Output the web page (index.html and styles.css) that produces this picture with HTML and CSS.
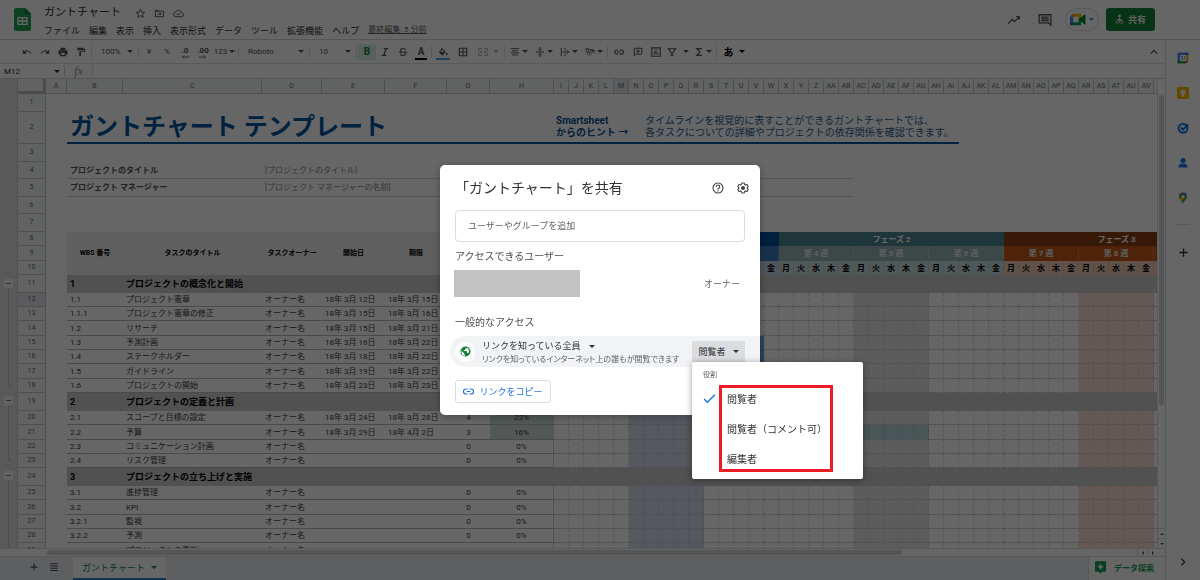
FILE: index.html
```html
<!DOCTYPE html>
<html lang="ja">
<head>
<meta charset="utf-8">
<meta name="viewport" content="width=device-width, initial-scale=1">
<title>ガントチャート</title>
<link rel="stylesheet" href="styles.css">
</head>
<body>
<div class="app">
  <header class="top">
    <svg class="logo" viewBox="0 0 17 23" aria-hidden="true"><path fill="#23a455" d="M2 0h9l6 6v15a2 2 0 0 1-2 2H2a2 2 0 0 1-2-2V2a2 2 0 0 1 2-2z"/><path fill="#117a3b" d="M11 0l6 6h-4.500a1.500 1.500 0 0 1-1.500-1.500z"/><path fill="none" stroke="#fff" stroke-width="1.300" d="M4 9.600h9v6.800H4zM4 13h9M8.500 9.600v6.800"/></svg>
    <div class="doc">
      <div class="doc-line">
        <h1 class="doc-title">ガントチャート</h1>
        <button class="mini" aria-label="スター"><svg viewBox="0 0 24 24"><path fill="none" stroke="currentColor" stroke-width="2" stroke-linejoin="round" d="M12 3l2.700 6 6.500.6-4.900 4.300 1.500 6.400-5.800-3.500-5.800 3.500 1.500-6.400L2.800 9.600 9.300 9z"/></svg></button>
        <button class="mini" aria-label="移動"><svg viewBox="0 0 24 24"><path fill="none" stroke="currentColor" stroke-width="2" d="M3 5h6l2 2h10v12H3zM3 7h8"/><path fill="none" stroke="currentColor" stroke-width="2" d="M8 13h7M12.500 10l3 3-3 3"/></svg></button>
        <button class="mini" aria-label="保存状態"><svg viewBox="0 0 24 24"><path fill="none" stroke="currentColor" stroke-width="2" d="M18.500 19H6a5 5 0 0 1-.6-9.900 7 7 0 0 1 13.200 1.300 4.300 4.300 0 0 1-.1 8.600z"/><path fill="none" stroke="currentColor" stroke-width="2" d="M8.500 13l2.500 2.500 4.500-4.500"/></svg></button>
      </div>
      <nav class="menus">
        <button>ファイル</button><button>編集</button><button>表示</button><button>挿入</button><button>表示形式</button><button>データ</button><button>ツール</button><button>拡張機能</button><button>ヘルプ</button>
        <a class="edited" href="#">最終編集: 5 分前</a>
      </nav>
    </div>
    <div class="top-actions">
      <button class="act" aria-label="アクティビティ"><svg viewBox="0 0 24 24"><path fill="none" stroke="currentColor" stroke-width="2" d="M2 18l7-7 4 4 8-9M15.500 6H21v5.500"/></svg></button>
      <button class="act" aria-label="コメント履歴"><svg viewBox="0 0 24 24"><path fill="none" stroke="currentColor" stroke-width="2.200" d="M2 3h20v18l-4-4H2z"/><path stroke="currentColor" stroke-width="2" d="M5.500 7h13M5.500 10h13M5.500 13h13"/></svg></button>
      <button class="meet" aria-label="ビデオ通話"><svg viewBox="0 0 30 24"><path fill="#ea4335" d="M0 7l6-6v6z"/><path fill="#fbbc04" d="M6 1h13a2 2 0 0 1 2 2v7l-5 3V7H6z"/><path fill="#4285f4" d="M0 7h6v10H0z"/><path fill="#1967d2" d="M0 17h6v6H2a2 2 0 0 1-2-2z"/><path fill="#00ac47" d="M6 17h10v-5l5-3v12a2 2 0 0 1-2 2H6z"/><path fill="#00832d" d="M16 12l5-4 6-5c1-.6 2 0 2 1v16c0 1-1 1.600-2 1l-6-5z"/></svg><svg class="caret blue" viewBox="0 0 10 5"><path d="M0 0h10L5 5z"/></svg></button>
      <button class="share"><svg viewBox="0 0 20 24"><circle cx="10" cy="4" r="3" fill="currentColor"/><path fill="currentColor" d="M9 7h2v4h2a3 3 0 0 1 3 3H4a3 3 0 0 1 3-3h2z"/><path fill="none" stroke="currentColor" stroke-width="2" d="M4 15a3 3 0 1 0 4 4h4a3 3 0 1 0 4-4z"/></svg>共有</button>
    </div>
  </header>

  <div class="below">
    <main class="work">
      <div class="toolbar">
        <button class="t" aria-label="元に戻す"><svg viewBox="0 0 24 24"><path fill="currentColor" d="M2 6v10h10l-4-4c4-3 9-2 12 4l2-1C18 7 11 6 6 10z"/></svg></button>
        <button class="t" aria-label="やり直す"><svg viewBox="0 0 24 24"><path fill="currentColor" d="M22 6v10H12l4-4c-4-3-9-2-12 4l-2-1C6 7 13 6 18 10z"/></svg></button>
        <button class="t" aria-label="印刷"><svg viewBox="0 0 24 24"><path fill="currentColor" d="M6 2h12v5H6zM4 8h16a3 3 0 0 1 3 3v7h-4v4H5v-4H1v-7a3 3 0 0 1 3-3zm4 6v5h8v-5z"/></svg></button>
        <button class="t" aria-label="書式を貼り付け"><svg viewBox="0 0 24 24"><path fill="currentColor" d="M3 2h15v2h4v8H12v10H8V10h11V7h-1v1H3z"/></svg></button>
        <i class="sep"></i>
        <label class="pick"><select aria-label="ズーム"><option>100%</option></select><svg class="caret" viewBox="0 0 10 5"><path d="M0 0h10L5 5z"/></svg></label>
        <i class="sep"></i>
        <button class="t">¥</button><button class="t">%</button>
        <button class="t dec">.0<svg viewBox="0 0 10 5"><path fill="none" stroke="currentColor" d="M10 2.500H2M4 .5l-2 2 2 2"/></svg></button>
        <button class="t dec">.00<svg viewBox="0 0 10 5"><path fill="none" stroke="currentColor" d="M0 2.500h8M6 .5l2 2-2 2"/></svg></button>
        <button class="t drop">123<svg class="caret" viewBox="0 0 10 5"><path d="M0 0h10L5 5z"/></svg></button>
        <i class="sep"></i>
        <label class="pick wide"><select aria-label="フォント"><option>Roboto</option></select><svg class="caret" viewBox="0 0 10 5"><path d="M0 0h10L5 5z"/></svg></label>
        <i class="sep"></i>
        <label class="pick"><select aria-label="フォントサイズ"><option>10</option></select><svg class="caret" viewBox="0 0 10 5"><path d="M0 0h10L5 5z"/></svg></label>
        <i class="sep"></i>
        <button class="t on" aria-label="太字"><b>B</b></button>
        <button class="t" aria-label="斜体"><svg viewBox="0 0 24 24"><path fill="none" stroke="currentColor" stroke-width="3" d="M9 4h11M4 20h11M15 4L9 20"/></svg></button>
        <button class="t" aria-label="取り消し線"><svg viewBox="0 0 24 24"><path fill="none" stroke="currentColor" stroke-width="2.600" d="M18 8c0-3-3-4.500-6-4.500S6 5 6 7.500c0 2 1.500 3 3.500 3.800M2 12.500h20M6 16c0 3 3 4.500 6 4.500s6-1.500 6-4.300c0-1-.3-1.700-.8-2.300"/></svg></button>
        <button class="t ink" aria-label="文字の色"><b>A</b></button>
        <i class="sep"></i>
        <button class="t pad ink fill" aria-label="塗りつぶしの色"><svg viewBox="0 0 24 24"><path fill="currentColor" d="M8 1l9.500 9.500a2 2 0 0 1 0 2.500L12 19a2 2 0 0 1-3 0l-6-6a2 2 0 0 1 0-2.500L8.500 5 6.500 2.500zM10 7l-5 5h10zM21 13s2.500 3 2.500 4.500a2.300 2.300 0 0 1-4.600 0C18.900 16 21 13 21 13z"/></svg></button>
        <button class="t pad" aria-label="枠線"><svg viewBox="0 0 24 24"><path fill="none" stroke="currentColor" stroke-width="2.600" d="M3 3h18v18H3zM12 3v18M3 12h18"/></svg></button>
        <button class="t drop off" aria-label="セルを結合"><svg viewBox="0 0 24 24"><path fill="none" stroke="currentColor" stroke-width="2.400" d="M9 4H1v5M15 4h8v5M9 20H1v-5M15 20h8v-5M1 12h8M6 9l3 3-3 3M23 12h-8M18 9l-3 3 3 3"/></svg><svg class="caret" viewBox="0 0 10 5"><path d="M0 0h10L5 5z"/></svg></button>
        <i class="sep"></i>
        <button class="t drop" aria-label="水平方向の配置"><svg viewBox="0 0 24 24"><path stroke="currentColor" stroke-width="2.200" d="M2 4h20M5 9h14M2 14h20M5 19h14"/></svg><svg class="caret" viewBox="0 0 10 5"><path d="M0 0h10L5 5z"/></svg></button>
        <button class="t drop" aria-label="垂直方向の配置"><svg viewBox="0 0 24 24"><path fill="none" stroke="currentColor" stroke-width="2.400" d="M2 12h20M12 0v8M8.500 5L12 8.500 15.500 5M12 24v-8M8.500 19l3.500-3.500 3.500 3.500"/></svg><svg class="caret" viewBox="0 0 10 5"><path d="M0 0h10L5 5z"/></svg></button>
        <button class="t drop" aria-label="テキストの折り返し"><svg viewBox="0 0 24 24"><path fill="none" stroke="currentColor" stroke-width="2.400" d="M3 2v20M12 2v6M12 16v6M6 12h15M17 8l4 4-4 4"/></svg><svg class="caret" viewBox="0 0 10 5"><path d="M0 0h10L5 5z"/></svg></button>
        <button class="t drop" aria-label="テキストの回転"><svg viewBox="0 0 24 24"><path fill="none" stroke="currentColor" stroke-width="2.200" d="M2 4l17 3L6 16zM7 5l3 8M9 21L22 8M16 8h6v6"/></svg><svg class="caret" viewBox="0 0 10 5"><path d="M0 0h10L5 5z"/></svg></button>
        <i class="sep"></i>
        <button class="t pad" aria-label="リンクを挿入"><svg viewBox="0 0 24 24"><path fill="none" stroke="currentColor" stroke-width="2.600" d="M10 17H6.500a5 5 0 0 1 0-10H10M14 7h3.500a5 5 0 0 1 0 10H14M8 12h8"/></svg></button>
        <button class="t" aria-label="コメントを挿入"><svg viewBox="0 0 24 24"><path fill="none" stroke="currentColor" stroke-width="2.400" d="M3 3h18v14H7l-4 4zM12 6v8M8 10h8"/></svg></button>
        <button class="t" aria-label="グラフを挿入"><svg viewBox="0 0 24 24"><path fill="none" stroke="currentColor" stroke-width="2.600" d="M2 2h20v20H2zM8 11v7M12 6v12M16 14v4"/></svg></button>
        <button class="t drop filter" aria-label="フィルタ"><svg viewBox="0 0 24 24"><path fill="none" stroke="currentColor" stroke-width="2.600" d="M3 4h18l-7 9v8h-4v-8z"/></svg><svg class="caret" viewBox="0 0 10 5"><path d="M0 0h10L5 5z"/></svg></button>
        <button class="t drop" aria-label="関数"><svg viewBox="0 0 24 24"><path fill="none" stroke="currentColor" stroke-width="3" d="M19 4H7l7 8-7 8h12"/></svg><svg class="caret" viewBox="0 0 10 5"><path d="M0 0h10L5 5z"/></svg></button>
        <i class="sep"></i>
        <button class="t drop kana"><b>あ</b><svg class="caret" viewBox="0 0 10 5"><path d="M0 0h10L5 5z"/></svg></button>
        <button class="t last" aria-label="メニューを非表示"><svg viewBox="0 0 24 24"><path fill="none" stroke="currentColor" stroke-width="3" d="M4 16l8-8 8 8"/></svg></button>
      </div>

      <div class="formula">
        <label class="pick namebox"><select aria-label="セル名"><option>M12</option></select><svg class="caret" viewBox="0 0 10 5"><path d="M0 0h10L5 5z"/></svg></label>
        <i class="fx">fx</i>
        <input class="fx-input" aria-label="数式">
      </div>

      <div class="sheet">
        <div class="groups">
          <div class="g-top"></div>
          <div class="g g1"><button aria-label="グループを閉じる"></button><span></span></div>
          <div class="g g2"><button aria-label="グループを閉じる"></button><span></span></div>
          <div class="g g3"><button aria-label="グループを閉じる"></button><span></span></div>
        </div>
        <div class="grid-view"><table class="grid" id="grid"></table></div>
        <div class="vbar"><span class="vthumb"></span><button aria-label="上へ"><svg viewBox="0 0 10 5"><path d="M0 5h10L5 0z"/></svg></button><button aria-label="下へ"><svg viewBox="0 0 10 5"><path d="M0 0h10L5 5z"/></svg></button></div>
      </div>
      <div class="hbar"><span class="hthumb"></span><button aria-label="左へ"><svg viewBox="0 0 5 10"><path d="M5 0v10L0 5z"/></svg></button><button aria-label="右へ"><svg viewBox="0 0 5 10"><path d="M0 0v10l5-5z"/></svg></button></div>

      <footer class="tabs">
        <button class="tab-ic" aria-label="シートを追加"><svg viewBox="0 0 24 24"><path fill="none" stroke="currentColor" stroke-width="3" d="M12 4v16M4 12h16"/></svg></button>
        <button class="tab-ic" aria-label="すべてのシート"><svg viewBox="0 0 24 24"><path stroke="currentColor" stroke-width="2.600" d="M3 4h18M3 9.500h18M3 15h18M3 20.500h18"/></svg></button>
        <button class="tab">ガントチャート<svg class="caret" viewBox="0 0 10 5"><path d="M0 0h10L5 5z"/></svg></button>
        <button class="explore"><svg viewBox="0 0 22 25"><path fill="#0f9d58" d="M2 0h18a2 2 0 0 1 2 2v17a2 2 0 0 1-2 2h-6l-3 4-3-4H2a2 2 0 0 1-2-2V2a2 2 0 0 1 2-2z"/><path fill="#fff" d="M11 4l2 5 5 2-5 2-2 5-2-5-5-2 5-2z"/></svg>データ探索</button>
      </footer>
    </main>

    <aside class="side">
      <button aria-label="カレンダー"><svg viewBox="0 0 24 24"><path fill="#4285f4" d="M1 3a2 2 0 0 1 2-2h15v5H6v12H1z"/><path fill="#1967d2" d="M18 1h3a2 2 0 0 1 2 2v3h-5z"/><path fill="#fbbc04" d="M18 6h5v12h-5z"/><path fill="#34a853" d="M6 18h12v5H6z"/><path fill="#188038" d="M1 18h5v5H3a2 2 0 0 1-2-2z"/><path fill="#ea4335" d="M18 18h5l-5 5z"/><path fill="#fff" d="M6 6h12v12H6z"/><path fill="none" stroke="#4285f4" stroke-width="1.500" d="M8 9h3v6H8M8.500 12H11M14 9.500l1.500-1v7"/></svg></button>
      <button aria-label="Keep"><svg viewBox="0 0 24 24"><rect width="24" height="24" rx="2" fill="#fbbc04"/><circle cx="12" cy="10.500" r="5" fill="#fff"/><path fill="#fff" d="M9.500 16h5v3h-5z"/></svg></button>
      <button aria-label="ToDo リスト"><svg viewBox="0 0 24 24"><circle cx="12" cy="12.500" r="8.800" fill="#fff" stroke="#2684fc" stroke-width="4.500"/><path fill="none" stroke="#0b57d0" stroke-width="3.500" d="M8 11l4 4L22 5"/></svg></button>
      <button aria-label="連絡先"><svg viewBox="0 0 24 24"><circle cx="12" cy="7" r="5" fill="#1a73e8"/><path fill="#1a73e8" d="M3 21v-2c0-4 4-6 9-6s9 2 9 6v2z"/></svg></button>
      <button aria-label="マップ"><svg viewBox="0 0 24 24"><path fill="#34a853" d="M4 9a8 8 0 0 1 16 0c0 6-6 8-8 15C10 17 4 15 4 9z"/><path fill="#fbbc04" d="M5 13l10-8 1 7-8 6z"/><path fill="#4285f4" d="M12 1a8 8 0 0 1 7 4.500l-8 8z"/><path fill="#ea4335" d="M6 4a8 8 0 0 1 6-3L7 8z"/><circle cx="12" cy="9" r="3" fill="#fff"/></svg></button>
      <hr>
      <button class="add" aria-label="アドオンを取得"><svg viewBox="0 0 24 24"><path fill="none" stroke="currentColor" stroke-width="3" d="M12 3v18M3 12h18"/></svg></button>
      <button class="collapse" aria-label="サイドパネルを非表示"><svg viewBox="0 0 24 24"><path fill="none" stroke="currentColor" stroke-width="3" d="M8 4l8 8-8 8"/></svg></button>
    </aside>
  </div>
</div>

<div class="scrim">
  <section class="dialog" role="dialog" aria-labelledby="dlg-title">
    <div class="dlg-head">
      <h2 id="dlg-title">「ガントチャート」を共有</h2>
      <button aria-label="ヘルプ"><svg viewBox="0 0 24 24"><circle cx="12" cy="12" r="10" fill="none" stroke="currentColor" stroke-width="2.200"/><path fill="none" stroke="currentColor" stroke-width="2.200" d="M8.500 9.500c0-4.500 7-4.500 7 0 0 2.500-3.500 2.500-3.500 5.500M12 16.500V19"/></svg></button>
      <button aria-label="設定"><svg viewBox="0 0 24 24"><path fill="none" stroke="currentColor" stroke-width="2.200" stroke-linejoin="round" d="M9.500 2h5l.6 3 2 1.200 3-1 2.400 4.200-2.300 2v1.200l2.300 2-2.400 4.200-3-1-2 1.200-.6 3h-5l-.6-3-2-1.200-3 1-2.400-4.200 2.300-2v-1.200l-2.300-2 2.400-4.200 3 1 2-1.200z"/><circle cx="12" cy="12" r="4" fill="currentColor"/></svg></button>
    </div>
    <input class="people" type="text" placeholder="ユーザーやグループを追加" aria-label="ユーザーやグループを追加">
    <h3>アクセスできるユーザー</h3>
    <div class="owner"><span class="redacted"></span><span class="owner-role">オーナー</span></div>
    <h3 class="general">一般的なアクセス</h3>
    <div class="access">
      <span class="globe"><svg viewBox="0 0 24 24"><circle cx="12" cy="12" r="11" fill="#188038"/><path fill="#fff" d="M3.200 10.500L9 16v1a2 2 0 0 0 2 2v2.500A9 9 0 0 1 3.200 10.500zM15 3.500V4a2 2 0 0 1-2 2h-2v2a1 1 0 0 1-1 1H8v2h6a1 1 0 0 1 1 1v3h1a2 2 0 0 1 2 1.500 9 9 0 0 0-3-13z"/></svg></span>
      <div class="access-text">
        <button class="scope">リンクを知っている全員<svg class="caret" viewBox="0 0 10 5"><path d="M0 0h10L5 5z"/></svg></button>
        <p>リンクを知っているインターネット上の誰もが閲覧できます</p>
      </div>
      <div class="role">
        <button class="role-btn" aria-haspopup="menu" aria-expanded="true">閲覧者<svg class="caret" viewBox="0 0 10 5"><path d="M0 0h10L5 5z"/></svg></button>
        <div class="role-menu" role="menu">
          <div class="role-label">役割</div>
          <div class="role-body">
            <svg class="check" viewBox="0 0 24 24"><path fill="none" stroke="currentColor" stroke-width="2.600" d="M2 13l6 6L22 5"/></svg>
            <div class="marked">
              <button role="menuitem">閲覧者</button>
              <button role="menuitem">閲覧者（コメント可）</button>
              <button role="menuitem">編集者</button>
            </div>
          </div>
        </div>
      </div>
    </div>
    <button class="copy"><svg viewBox="0 0 24 24"><path fill="none" stroke="currentColor" stroke-width="2.600" d="M10 17.500H6.500a5.500 5.500 0 0 1 0-11H10M14 6.500h3.500a5.500 5.500 0 0 1 0 11H14M8 12h8"/></svg>リンクをコピー</button>
  </section>
</div>
<script src="script.js"></script>
</body>
</html>
```

FILE: styles.css
```css
* { box-sizing: border-box; }
body {
  margin: 0;
  font-family: Roboto, "Noto Sans CJK JP", sans-serif;
  font-size: 9px;
  color: #303134;
  background: #fff;
}
button, input, select { font: inherit; color: inherit; background: none; border: 0; padding: 0; margin: 0; }
button { display: flex; align-items: center; justify-content: center; white-space: nowrap; }
h1, h2, h3, p { margin: 0; font-weight: 400; }
svg { display: block; flex: none; }
.caret { width: 6px; height: 3px; fill: currentColor; }
.caret.blue { fill: #1a73e8; }

.app { display: flex; flex-direction: column; height: 100vh; overflow: hidden; }

.top { display: flex; align-items: flex-start; height: 40px; padding: 0 45px 0 14px; border-bottom: 1px solid #d2d4d7; flex: none; }
.logo { width: 17px; height: 23px; margin-top: 8px; }
.doc { margin: 4px 0 0 13px; flex: 1; }
.doc-line { display: flex; align-items: center; gap: 8px; height: 18px; }
.doc-title { font-size: 11px; line-height: 18px; margin-right: 6px; }
.mini { color: #505357; }
.mini svg { width: 11px; height: 11px; }
.menus { display: flex; align-items: center; gap: 9px; height: 16px; }
.edited { color: #5f6368; font-size: 8px; line-height: 10px; }
.top-actions { display: flex; align-items: center; padding-top: 8px; }
.act { width: 31px; height: 23px; color: #505357; }
.act svg { width: 14px; height: 14px; }
.meet { gap: 3px; width: 34px; height: 23px; margin: 0 7px 0 5px; border: 1px solid #dadce0; border-radius: 12px; }
.meet svg:first-child { width: 16px; height: 13px; }
.meet .caret { width: 5px; }
.share { gap: 4px; width: 49px; height: 23px; border-radius: 3px; background: #188038; color: #e8f0ea; font-weight: 700; }
.share svg { width: 9px; height: 11px; }

.below { display: flex; flex: 1; min-height: 0; }
.work { display: flex; flex-direction: column; flex: 1; min-width: 0; }

.toolbar { display: flex; align-items: center; height: 24px; padding-left: 18px; border-bottom: 1px solid #e0e2e5; color: #505357; flex: none; }
.t { width: 18px; height: 16px; font-size: 8px; }
.t > svg:not(.caret) { width: 10px; height: 10px; }
.t b { font-size: 10px; }
.t.pad { width: 20px; }
.t.drop { width: 25px; gap: 2px; }
.t.filter { gap: 6px; }
.t.off { width: 30px; gap: 5px; color: #aaa; }
.t.on { background: #dcefe2; color: #188038; border-radius: 2px; }
.t.ink { position: relative; }
.t.ink::after { content: ""; position: absolute; left: 3px; right: 3px; bottom: 0; height: 2px; background: #000; }
.t.fill::after { background: #5ba3e6; }
.t.dec { flex-direction: column; font-weight: 700; line-height: 8px; padding-top: 3px; }
.t.dec svg:not(.caret) { width: 8px; height: 4px; }
.t.kana { width: 32px; gap: 5px; color: #000; }
.t.last { margin-left: auto; width: 22px; }
.sep { width: 1px; height: 12px; margin: 0 1px; background: #dadce0; flex: none; }
.pick { display: flex; align-items: center; width: 44px; padding: 0 4px 0 8px; font-size: 8px; }
.pick.wide { width: 68px; }
.pick select { appearance: none; flex: 1; min-width: 0; }

.formula { display: flex; align-items: center; height: 15px; border-bottom: 1px solid #d5d7da; flex: none; }
.namebox { width: 65px; height: 11px; padding-left: 4px; border-right: 1px solid #d5d7da; }
.fx { width: 28px; height: 11px; border-right: 1px solid #dadce0; text-align: center; font: italic 12px/10px "Liberation Serif", serif; color: #999; }
.fx-input { flex: 1; height: 11px; }

.sheet { display: flex; flex: 1; min-height: 0; overflow: hidden; }
.groups { width: 18px; display: flex; flex-direction: column; background: #dfdfdf; border-right: 1px solid #c6c6c6; flex: none; }
.g-top { height: 196px; flex: none; }
.g { display: flex; flex-direction: column; align-items: center; padding: 4px 0 6px; flex: none; }
.g1 { height: 117px; }
.g2 { height: 75px; }
.g3 { height: 90px; }
.g button { width: 9px; height: 9px; background: #f8f8f8; border-radius: 1px; }
.g button::before { content: ""; width: 5px; height: 1px; background: #777; }
.g span { flex: 1; width: 5px; margin-left: 4px; border: solid #c4c4c4; border-width: 0 0 1px 1px; }
.grid-view { flex: 1; min-width: 0; overflow: hidden; }

.grid { table-layout: fixed; width: 1211px; border-collapse: separate; border-spacing: 0; font-size: 8px; line-height: 11px; color: #404040; }
.grid td, .grid th { padding: 0; overflow: hidden; white-space: nowrap; font-weight: 400; text-align: left; }
.w-head { width: 28px; } .w-a { width: 21px; } .w-b { width: 56px; } .w-c { width: 139px; } .w-d { width: 60px; }
.w-e { width: 63px; } .w-f { width: 62px; } .w-g { width: 43px; } .w-h { width: 64px; } .w-day { width: 15px; }
.s14 { height: 14px; } .s15 { height: 15px; } .s17 { height: 17px; } .s18 { height: 18px; } .s32 { height: 32px; }
.grid .col, .grid .rh { background: #f3f5f6; color: #6a6e73; font-size: 7px; line-height: 9px; text-align: center; border-right: 1px solid #c4c7ca; border-bottom: 1px solid #c4c7ca; }
.grid .corner { border-right: 3px solid #bbb; border-bottom: 3px solid #bbb; }
.grid .sel { background: #e2e4ea; }
.grid .title { overflow: visible; padding-left: 3px; font-size: 24px; line-height: 28px; font-weight: 700; color: #00559f; border-bottom: 2px solid #00559f; }
.grid .tip { padding-left: 1px; font-size: 10px; line-height: 12px; color: #2c5f92; border-bottom: 2px solid #00559f; }
.grid .tip.strong { font-weight: 700; padding-left: 2px; color: #0b5296; }
.grid .meta { padding-left: 3px; border-bottom: 1px solid #d4d4d4; }
.grid .meta.strong { font-weight: 700; color: #555; }
.grid .meta.hint { color: #888; }
.grid .cap { background: #ededed; font-size: 7px; font-weight: 700; text-align: center; color: #000; }
.grid .band { text-align: center; font-weight: 700; color: #fff; }
.grid .week { color: #e8eeee; border-right: 1px solid rgba(255, 255, 255, .2); }
.grid .dow { text-align: center; font-weight: 700; color: #000; border-right: 1px solid rgba(0, 0, 0, .06); }
.p1.phase { background: #00509c; } .p1.week { background: #3a7cbf; } .p1.dow { background: #c6d6e8; }
.p2.phase { background: #4b868e; } .p2.week { background: #97b4b4; } .p2.dow { background: #cbdcde; }
.p3.phase { background: #87400f; } .p3.week { background: #c4591a; } .p3.dow { background: #f0cbb6; }
.grid .section { background: #cbcbcb; font-size: 9px; font-weight: 700; color: #000; padding-left: 3px; }
.grid .cell { padding-left: 3px; border-bottom: 1px solid #b8b8b8; }
.grid .num { text-align: center; padding-left: 0; }
.grid .done { background: #ccdcd5; }
.grid .h-edge { border-right: 1px solid #d0d0d0; }
.grid .day { border-right: 1px dashed #dedede; border-bottom: 1px dashed #c8c8c8; }
.grid .st-blue { background: #d4dfee; border-right-color: #c2cddb; }
.grid .st-grey { background: #e7e7e7; border-right-color: #d6d6d6; }
.grid .st-peach { background: #f8dccf; border-right-color: #e6cabc; }
.grid .bar-blue { background: #6fa8dc; border-color: #6fa8dc; }
.grid .bar-teal { background: #b9d5dc; border-right-color: #a8c5cc; }

.vbar { display: flex; flex-direction: column; width: 8px; background: #fff; border-left: 1px solid #e0e0e0; flex: none; }
.vthumb { width: 5px; height: 66%; margin: 16px 1px auto; border-radius: 3px; background: #d3d5da; }
.vbar button { width: 7px; height: 10px; border-top: 1px solid #dadce0; }
.vbar svg { width: 4px; height: 2px; fill: #555; }
.hbar { display: flex; align-items: center; height: 8px; padding: 0 8px 0 47px; border-top: 1px solid #dadce0; flex: none; }
.hthumb { width: 77%; height: 5px; margin-right: auto; border-radius: 3px; background: #d3d5da; }
.hbar button { width: 10px; height: 7px; border-left: 1px solid #dadce0; }
.hbar svg { width: 2px; height: 4px; fill: #555; }

.tabs { display: flex; height: 24px; padding-left: 24px; background: #ebedf0; border-top: 1px solid #dadce0; color: #505357; flex: none; }
.tab-ic { width: 20px; padding-bottom: 4px; }
.tab-ic svg { width: 10px; height: 10px; }
.tab { gap: 6px; width: 93px; margin-left: 9px; padding-bottom: 1px; background: #fff; color: #188038; border-bottom: 2px solid #2f7fd0; }
.explore { justify-content: flex-start; gap: 8px; width: 77px; margin-left: auto; padding: 0 0 2px 6px; background: #fff; border-left: 1px solid #dadce0; font-size: 8px; font-weight: 700; color: #0f9d58; }
.explore svg { width: 11px; height: 13px; }

.side { display: flex; flex-direction: column; align-items: center; width: 35px; padding-bottom: 12px; border-left: 1px solid #dadce0; color: #333; flex: none; }
.side button { height: 35px; width: 34px; }
.side svg { width: 12px; height: 12px; }
.side hr { width: 13px; margin: 9px 0 10px; border: 0; border-top: 1px solid #dadce0; }
.side .add svg { width: 11px; height: 11px; }
.side .collapse { height: 12px; margin-top: auto; }
.side .collapse svg { width: 10px; height: 10px; }

.scrim { position: fixed; inset: 0; display: flex; align-items: center; justify-content: center; background: rgba(0, 0, 0, .6); }
.dialog { width: 320px; padding: 12px 0 12px 15px; background: #fff; border-radius: 5px; box-shadow: 0 2px 8px rgba(0, 0, 0, .3); }
.dlg-head { display: flex; align-items: center; gap: 13px; padding-right: 11px; height: 22px; color: #3c4043; }
.dlg-head h2 { flex: 1; font-size: 14px; line-height: 22px; white-space: nowrap; color: #303134; }
.dlg-head svg { width: 12px; height: 12px; }
.people { display: block; width: 290px; height: 32px; margin: 11px 0 8px; padding: 0 12px; border: 1px solid #dadce0; border-radius: 4px; }
.people::placeholder { color: #5f6368; opacity: 1; }
.dialog h3 { font-size: 10px; line-height: 14px; color: #4a4d51; }
.owner { display: flex; align-items: center; justify-content: space-between; margin: 6px 20px 19px -1px; color: #5f6368; }
.redacted { width: 126px; height: 27px; background: #c2c2c2; }
.access { display: flex; align-items: center; height: 31px; margin: 6px 0 13px -5px; padding: 0 15px 0 5px; border-radius: 16px 0 0 16px; background: #f1f3f4; }
.globe { display: flex; align-items: center; justify-content: center; width: 20px; height: 20px; border-radius: 50%; background: #fff; }
.globe svg { width: 11px; height: 11px; }
.access-text { flex: 1; min-width: 0; margin-left: 7px; padding-top: 2px; white-space: nowrap; }
.scope { gap: 8px; line-height: 14px; }
.access-text p { font-size: 8px; line-height: 13px; color: #5f6368; font-feature-settings: "palt"; }
.role { position: relative; }
.role-btn { gap: 7px; width: 53px; height: 21px; border-radius: 2px 2px 0 0; background: #dadce0; }
.role-menu { position: absolute; top: 21px; left: 0; width: 171px; padding: 7px 0 7px 11px; background: #fff; border-radius: 2px; box-shadow: 0 1px 6px rgba(0, 0, 0, .4); }
.role-label { font-size: 7px; line-height: 12px; color: #5f6368; }
.role-body { display: flex; gap: 3px; margin-top: 4px; }
.check { width: 13px; height: 13px; margin-top: 7px; color: #1a73e8; }
.marked { display: flex; flex-direction: column; gap: 10px; width: 114px; height: 87px; border: 3px solid #ed1c24; }
.marked button { justify-content: flex-start; height: 20px; padding-left: 5px; font-size: 10px; }
.copy { gap: 5px; width: 96px; height: 23px; border: 1px solid #dadce0; border-radius: 3px; color: #1a73e8; }
.copy svg { width: 11px; height: 11px; }
```

FILE: script.js
```js
const DAYS = 45;
const SHOWN_DAYS = 40;
const WEEKDAYS = ["月", "火", "水", "木", "金"];
const grid = document.getElementById("grid");

const td = (cls, text = "", span = 1, rows = 1) =>
  `<td class="${cls}" colspan="${span}" rowspan="${rows}">${text}</td>`;

function columnName(i) {
  if (i >= 8 + SHOWN_DAYS) return "";
  return i < 26 ? String.fromCharCode(65 + i) : "A" + String.fromCharCode(39 + i);
}

let html = "<colgroup>" + ["head", "a", "b", "c", "d", "e", "f", "g", "h"].map(w => `<col class="w-${w}">`).join("") +
  '<col class="w-day">'.repeat(DAYS) + "</colgroup>";

html += '<tr class="s15"><th class="col corner"></th>';
for (let i = 0; i < 8 + DAYS; i++) {
  html += `<th class="col${i === 12 ? " sel" : ""}">${columnName(i)}</th>`;
}
html += "</tr>";

let rowNumber = 0;
function row(size, cells) {
  rowNumber++;
  html += `<tr class="s${size}"><th class="rh${rowNumber === 12 ? " sel" : ""}">${rowNumber}</th><td></td>${cells}</tr>`;
}

row(18, "");
row(32, td("title", "ガントチャート テンプレート", 7) + td("tip strong", "Smartsheet<br>からのヒント →", 6) +
  td("tip", "タイムラインを視覚的に表すことができるガントチャートでは、<br>各タスクについての詳細やプロジェクトの依存関係を確認できます。", 21));
row(18, "");
row(17, td("meta strong", "プロジェクトのタイトル", 2) + td("meta hint", "[プロジェクトのタイトル]", 5) + td("meta", "", 20));
row(18, td("meta strong", "プロジェクト マネージャー", 2) + td("meta hint", "[プロジェクト マネージャーの名前]", 5) + td("meta", "", 20));
row(17, "");
row(18, "");
row(14, ["WBS 番号", "タスクのタイトル", "タスクオーナー", "開始日", "期限", "", ""].map(t => td("cap", t, 1, 3)).join("") +
  td("band phase p1", "", 15) + td("band phase p2", "フェーズ 2", 15) + td("band phase p3", "フェーズ 3", 15));
row(15, ["", "", "", "第 4 週", "第 5 週", "第 6 週", "第 7 週", "第 8 週", ""]
  .map((t, w) => td(`band week p${Math.floor(w / 3) + 1}`, t, 5)).join(""));
row(14, Array.from({ length: DAYS }, (_, d) =>
  td(`dow p${Math.floor(d / 15) + 1}`, d < SHOWN_DAYS ? WEEKDAYS[d % 5] : "")).join(""));

function section(size, number, name) {
  row(size, td("section", number) + td("section", name, 6 + DAYS));
}

function task(size, wbs, name, start, end, days, done, bar) {
  let cells = td("cell", wbs) + td("cell", name) + td("cell", "オーナー名") + td("cell", start) + td("cell", end) +
    td("cell num", days) + td("cell num h-edge" + (parseInt(done) > 0 ? " done" : ""), done);
  for (let d = 0; d < DAYS; d++) {
    const week = Math.floor(d / 5);
    let cls = "day" + ({ 1: " st-blue", 4: " st-grey", 7: " st-peach" }[week] || "");
    if (bar && d >= bar[1] && d <= bar[2]) cls += " bar-" + bar[0];
    cells += td(cls);
  }
  row(size, cells);
}

section(18, "1", "プロジェクトの概念化と開始");
task(14, "1.1", "プロジェクト憲章", "18年 3月 12日", "18年 3月 15日", "", "");
task(14, "1.1.1", "プロジェクト憲章の修正", "18年 3月 15日", "18年 3月 16日", "", "");
task(15, "1.2", "リサーチ", "18年 3月 15日", "18年 3月 21日", "", "");
task(14, "1.3", "予測計画", "18年 3月 16日", "18年 3月 22日", "", "", ["blue", 10, 13]);
task(14, "1.4", "ステークホルダー", "18年 3月 18日", "18年 3月 22日", "", "", ["blue", 10, 13]);
task(15, "1.5", "ガイドライン", "18年 3月 19日", "18年 3月 22日", "", "");
task(14, "1.6", "プロジェクトの開始", "18年 3月 23日", "18年 3月 23日", "", "");
section(18, "2", "プロジェクトの定義と計画");
task(14, "2.1", "スコープと目標の設定", "18年 3月 24日", "18年 3月 28日", "4", "22%");
task(15, "2.2", "予算", "18年 3月 29日", "18年 4月 2日", "3", "16%", ["teal", 20, 24]);
task(14, "2.3", "コミュニケーション計画", "", "", "0", "0%");
task(14, "2.4", "リスク管理", "", "", "0", "0%");
section(18, "3", "プロジェクトの立ち上げと実施");
task(14, "3.1", "進捗管理", "", "", "0", "0%");
task(15, "3.2", "KPI", "", "", "0", "0%");
task(14, "3.2.1", "監視", "", "", "0", "0%");
task(14, "3.2.2", "予測", "", "", "0", "0%");
task(15, "3.3", "プロジェクトの更新", "", "", "0", "0%");

grid.innerHTML = html;
```
